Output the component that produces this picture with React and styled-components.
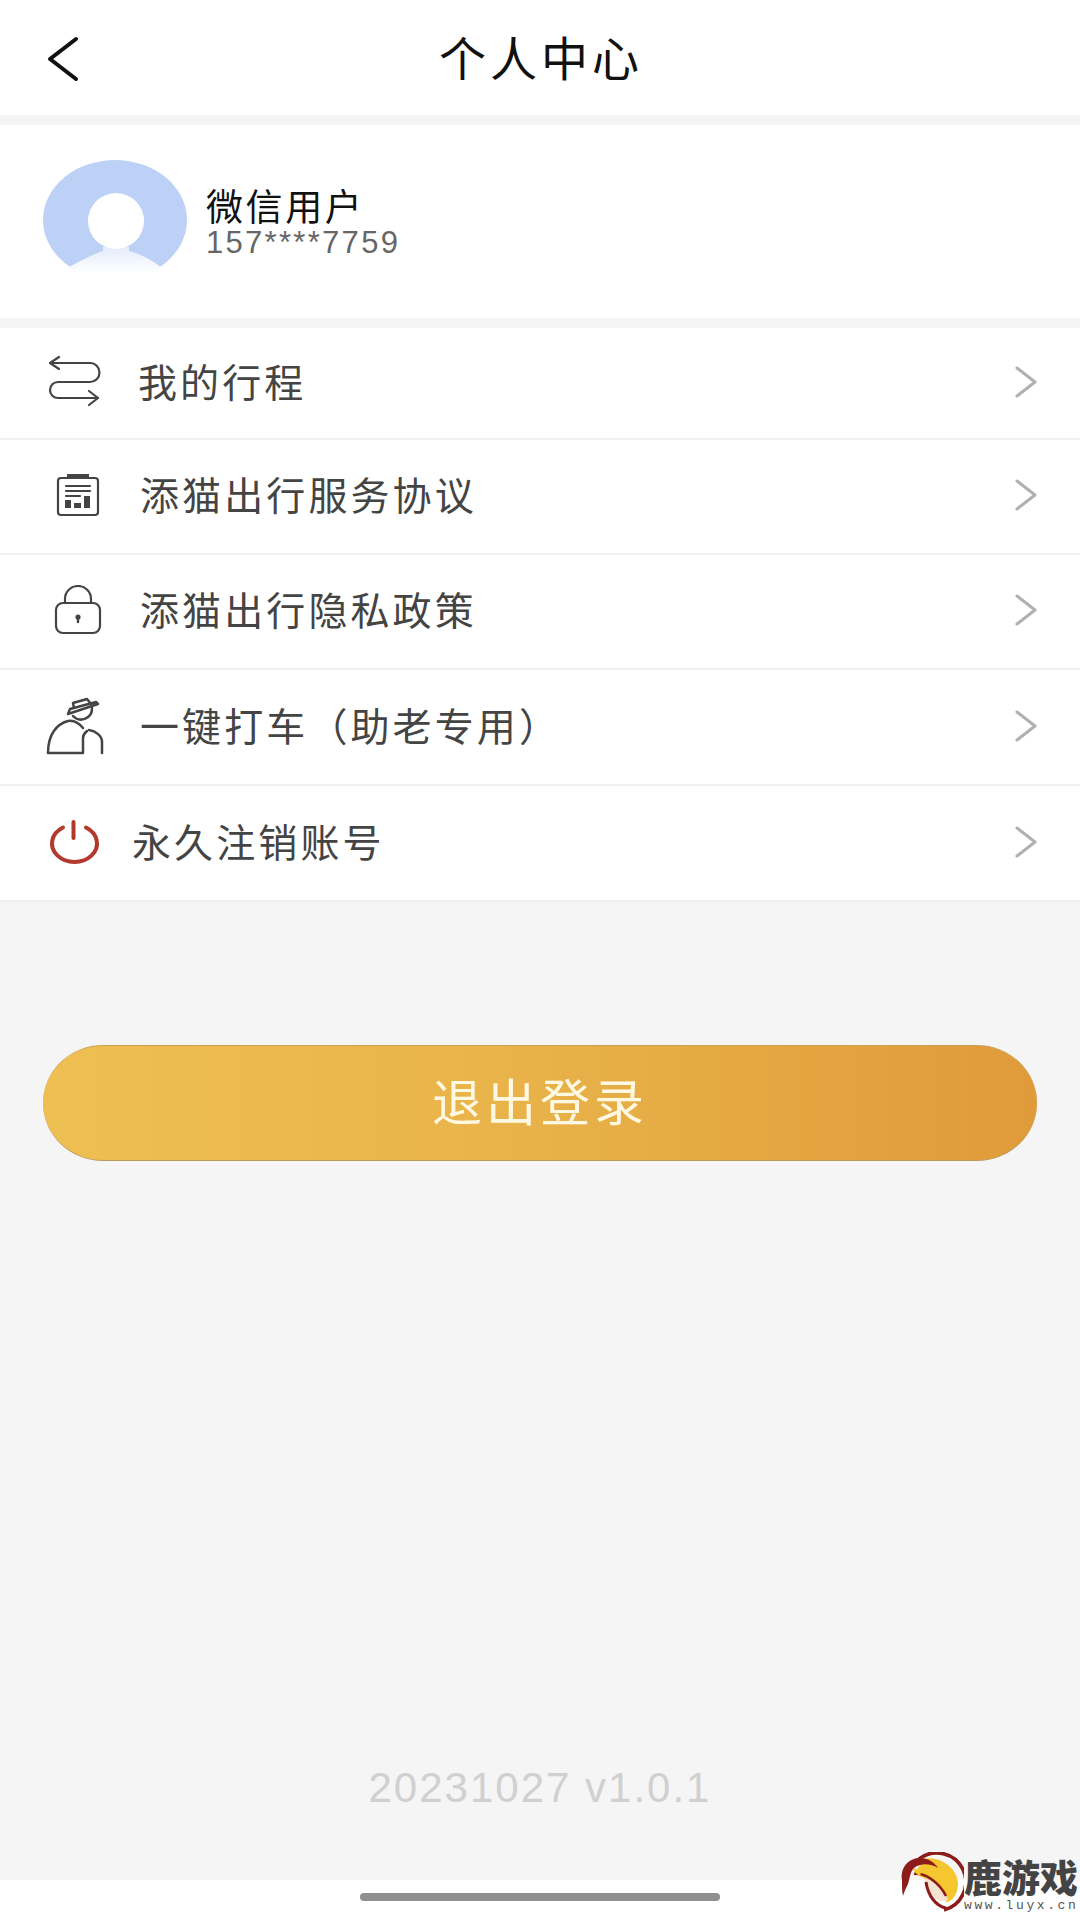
import React from 'react';
import styled, { createGlobalStyle } from 'styled-components';

const Global = createGlobalStyle`
  html, body { margin: 0; padding: 0; background: #f5f5f5; }
  * { box-sizing: border-box; }
  body { font-family: "Noto Sans CJK SC", "Noto Sans", sans-serif; }
`;

const Page = styled.div`
  position: relative;
  width: 1080px;
  height: 1920px;
  overflow: hidden;
  display: flex;
  flex-direction: column;
  background: #f5f5f5;
`;

const Header = styled.header`
  position: relative;
  height: 115px;
  flex: none;
  background: #fff;
  display: flex;
  align-items: center;
  justify-content: center;
`;

const BackIcon = styled.svg`
  position: absolute;
  left: 46px;
  top: 36px;
`;

const Title = styled.h1`
  margin: 0 0 4px 2px;
  font-size: 47px;
  line-height: 1;
  font-weight: 400;
  letter-spacing: 4px;
  color: #111;
`;

const Profile = styled.section`
  margin-top: 10px;
  height: 193px;
  flex: none;
  background: #fff;
  display: flex;
  align-items: flex-start;
  padding: 34px 0 0 43px;
  gap: 16px;
`;

const ProfileText = styled.div`
  display: flex;
  flex-direction: column;
  padding-top: 24px;
  margin-left: -3px;
`;

const UserName = styled.div`
  font-size: 37px;
  line-height: 44px;
  letter-spacing: 2.6px;
  color: #111;
`;

const Phone = styled.div`
  font-family: "Liberation Sans", sans-serif;
  font-size: 31px;
  line-height: 32px;
  letter-spacing: 2.3px;
  color: #666;
`;

const Menu = styled.nav`
  margin-top: 10px;
  flex: none;
  background: #fff;
  display: flex;
  flex-direction: column;
`;

const Row = styled.div`
  height: ${p => p.$h}px;
  display: flex;
  align-items: center;
  border-bottom: 2px solid #f0f0f0;
  padding-right: 43px;
`;

const IconSlot = styled.div`
  flex: none;
  width: ${p => p.$w}px;
  display: flex;
  justify-content: flex-start;
  padding-left: ${p => p.$pl}px;
  padding-bottom: ${p => p.$pb}px;
`;

const RowLabel = styled.span`
  flex: 1;
  font-size: 39px;
  line-height: 1;
  letter-spacing: 3.1px;
  color: #444;
  padding-bottom: 6px;
`;

const Chevron = styled.svg`
  flex: none;
  margin-bottom: 3px;
`;

const Main = styled.main`
  flex: 1;
  display: flex;
  flex-direction: column;
  align-items: center;
  padding-top: 143px;
`;

const LogoutButton = styled.button`
  width: 994px;
  height: 116px;
  border: none;
  border-radius: 60px / 58px;
  border-top: 1px solid #c9a258;
  border-bottom: 1px solid #b89a5c;
  background: linear-gradient(90deg, #eebf52 0%, #e9b44a 45%, #e09a3a 100%);
  font-family: inherit;
  font-size: 50px;
  line-height: 1;
  letter-spacing: 4px;
  color: #fff8e2;
  padding: 0 0 8px;
`;

const Version = styled.div`
  margin-top: auto;
  margin-bottom: 70px;
  font-family: "Liberation Sans", sans-serif;
  font-size: 42px;
  line-height: 44px;
  letter-spacing: 2px;
  color: #d0d0d0;
`;

const BottomBar = styled.div`
  height: 40px;
  flex: none;
  background: #fff;
  display: flex;
  justify-content: center;
  padding-top: 13px;
`;

const HomeIndicator = styled.div`
  width: 360px;
  height: 8px;
  border-radius: 4px;
  background: #8e8e8e;
`;

const Watermark = styled.div`
  position: absolute;
  left: 900px;
  top: 1852px;
  display: flex;
  align-items: flex-start;
`;

const LogoSvg = styled.svg`
  flex: none;
`;

const MarkText = styled.div`
  display: flex;
  flex-direction: column;
  padding-top: 2px;
  white-space: nowrap;
`;

const MarkName = styled.div`
  font-size: 38px;
  line-height: 44px;
  font-weight: 900;
  color: #444;
`;

const MarkUrl = styled.div`
  margin-top: 1px;
  font-family: "Liberation Mono", monospace;
  font-size: 13px;
  line-height: 14px;
  letter-spacing: 2.6px;
  color: #555;
`;

const ink = { fill: 'none', stroke: '#444', strokeWidth: 2.2, strokeLinecap: 'round', strokeLinejoin: 'round' };

const RouteIcon = () => (
  <svg width="60" height="56" viewBox="0 0 60 56" {...ink}>
    <path d="M6 8H46a9.5 9.5 0 0 1 0 19H14a8 8 0 0 0 0 16H54" />
    <path d="M15 2L6 8L15 14" />
    <path d="M45 36L54 43L45 50" />
  </svg>
);

const ClipboardIcon = () => (
  <svg width="44" height="46" viewBox="0 0 44 46" {...ink}>
    <rect x="2" y="6" width="40" height="37" rx="3" />
    <rect x="11" y="2" width="22" height="3.5" fill="#444" stroke="none" />
    <path d="M10 14H34M10 19H34M10 24H24" />
    <rect x="9" y="28" width="6" height="8" fill="#444" stroke="none" />
    <rect x="18" y="31" width="7" height="5" fill="#444" stroke="none" />
    <rect x="28" y="24" width="6" height="12" fill="#444" stroke="none" />
  </svg>
);

const LockIcon = () => (
  <svg width="48" height="50" viewBox="0 0 48 50" {...ink}>
    <rect x="2" y="18" width="44" height="30" rx="7" />
    <path d="M11 18V14a13 13 0 0 1 26 0V18" />
    <circle cx="24" cy="32" r="2.6" fill="#444" stroke="none" />
    <path d="M24 33V37" strokeWidth="2.4" />
  </svg>
);

const PersonIcon = () => (
  <svg width="58" height="60" viewBox="0 0 58 60" {...ink} strokeWidth="2.5">
    <path d="M22 18L52 8L50 6L24 13Z" />
    <path d="M28 12L27 7L41 3L45 8" />
    <path d="M27 20a11 11 0 0 0 19-8" />
    <path d="M37 32C32 26 27 24 22 25C11 28 2 38 2 57H37V42C37 38 39 37 41 35" />
    <path d="M43 34C50 35 56 40 56 46V57" />
  </svg>
);

const PowerIcon = () => (
  <svg width="56" height="50" viewBox="0 0 56 50" fill="none" stroke="#b13a2c" strokeWidth="4" strokeLinecap="round">
    <path d="M17 9.5A22.5 18.5 0 1 0 40 9.5" />
    <path d="M27.5 4V20" />
  </svg>
);

const ArrowRight = () => (
  <Chevron width="22" height="32" viewBox="0 0 22 32" fill="none" stroke="#b0b0b0" strokeWidth="3" strokeLinecap="round" strokeLinejoin="round">
    <path d="M2 2L20 16L2 30" />
  </Chevron>
);

const Avatar = () => (
  <svg width="150" height="115" viewBox="0 0 150 115">
    <defs>
      <clipPath id="avatarClip"><rect x="0" y="0" width="150" height="108" /></clipPath>
      <linearGradient id="shoulder" x1="0" y1="0" x2="0" y2="1">
        <stop offset="0" stopColor="#e4ecfb" />
        <stop offset="1" stopColor="#ffffff" />
      </linearGradient>
    </defs>
    <ellipse cx="72" cy="61" rx="72" ry="60" fill="#bdd1f7" clipPath="url(#avatarClip)" />
    <path d="M26 108Q50 95 60 92V88H86V92Q100 95 118 108L112 115H32Z" fill="url(#shoulder)" />
    <circle cx="73" cy="62" r="28" fill="#fff" />
  </svg>
);

const Logo = () => (
  <LogoSvg width="64" height="62" viewBox="0 0 64 62">
    <path d="M24 7C36 3 58 14 58 32C58 42 52 50 46 50C40 40 30 26 14 22Z" fill="#f5c62f" />
    <path d="M19 7A29 29 0 1 1 44 58" fill="none" stroke="#8c1c1a" strokeWidth="3.6" />
    <path d="M2 28C0 14 10 6 20 6C28 6 34 10 38 16C30 11 20 11 14 16C10 20 10 26 8 32C6 36 4 40 3 44C2 40 2 34 2 28Z" fill="#8c1c1a" />
    <path d="M24 26C34 28 46 40 48 48C42 52 32 46 26 36Z" fill="#f3e3d0" />
    <path d="M14 22C26 20 40 32 46 44" fill="none" stroke="#8c1c1a" strokeWidth="2.6" />
    <path d="M26 30C28 44 36 54 46 56" fill="none" stroke="#8c1c1a" strokeWidth="3" />
    <path d="M14 17L20 23" fill="none" stroke="#f5c62f" strokeWidth="3" />
  </LogoSvg>
);

const items = [
  { label: '我的行程', Icon: RouteIcon, w: 138, pl: 44, h: 112, pb: 0 },
  { label: '添猫出行服务协议', Icon: ClipboardIcon, w: 140, pl: 56, h: 115, pb: 4 },
  { label: '添猫出行隐私政策', Icon: LockIcon, w: 140, pl: 54, h: 115, pb: 4 },
  { label: '一键打车（助老专用）', Icon: PersonIcon, w: 140, pl: 46, h: 116, pb: 2 },
  { label: '永久注销账号', Icon: PowerIcon, w: 132, pl: 46, h: 116, pb: 0 },
];

export default function App() {
  return (
    <Page>
      <Global />
      <Header>
        <BackIcon width="36" height="46" viewBox="0 0 36 46" fill="none" stroke="#111" strokeWidth="4" strokeLinecap="round" strokeLinejoin="round">
          <path d="M30 3L4 23L30 43" />
        </BackIcon>
        <Title>个人中心</Title>
      </Header>
      <Profile>
        <Avatar />
        <ProfileText>
          <UserName>微信用户</UserName>
          <Phone>157****7759</Phone>
        </ProfileText>
      </Profile>
      <Menu>
        {items.map(({ label, Icon, w, pl, h, pb }) => (
          <Row key={label} $h={h}>
            <IconSlot $w={w} $pl={pl} $pb={pb}><Icon /></IconSlot>
            <RowLabel>{label}</RowLabel>
            <ArrowRight />
          </Row>
        ))}
      </Menu>
      <Main>
        <LogoutButton>退出登录</LogoutButton>
        <Version>20231027 v1.0.1</Version>
      </Main>
      <BottomBar><HomeIndicator /></BottomBar>
      <Watermark>
        <Logo />
        <MarkText>
          <MarkName>鹿游戏</MarkName>
          <MarkUrl>www.luyx.cn</MarkUrl>
        </MarkText>
      </Watermark>
    </Page>
  );
}
